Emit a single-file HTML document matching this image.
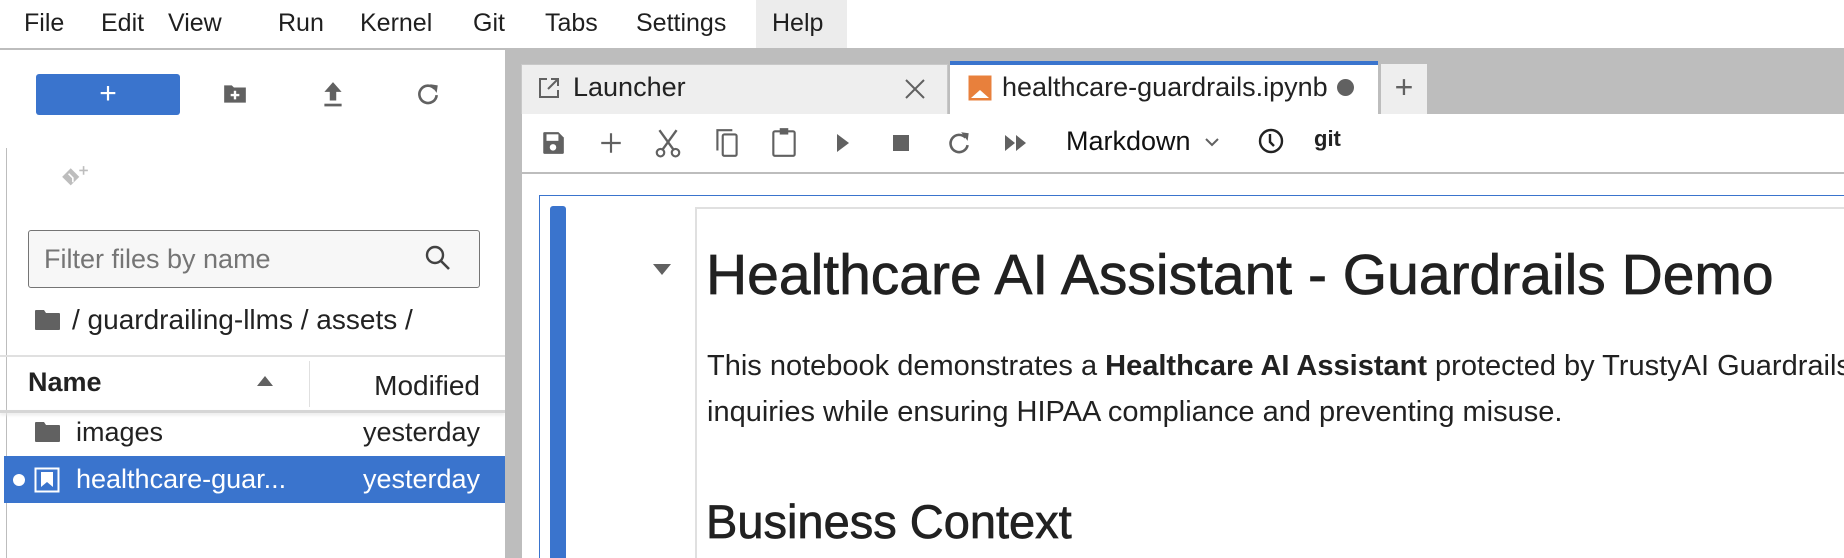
<!DOCTYPE html>
<html><head><meta charset="utf-8"><style>
*{margin:0;padding:0;box-sizing:border-box}
html,body{width:1844px;height:558px;overflow:hidden}
body{background:#fff;font-family:"Liberation Sans",sans-serif;color:#212121}
#w{position:relative;width:1844px;height:558px;overflow:hidden}
.a{position:absolute;white-space:nowrap}
.m{font-size:25px;top:9px;color:#1f1f1f}
.h{-webkit-text-stroke:0.7px #212121}
svg{position:absolute}
</style></head><body><div id="w">
<!-- menu -->
<div class="a" style="left:756px;top:0;width:91px;height:48px;background:#ececec"></div>
<div class="a m" style="left:24px">File</div>
<div class="a m" style="left:101px">Edit</div>
<div class="a m" style="left:168px">View</div>
<div class="a m" style="left:278px">Run</div>
<div class="a m" style="left:360px">Kernel</div>
<div class="a m" style="left:473px">Git</div>
<div class="a m" style="left:545px">Tabs</div>
<div class="a m" style="left:636px">Settings</div>
<div class="a m" style="left:772px">Help</div>
<div class="a" style="left:0;top:48px;width:1844px;height:2px;background:#bdbdbd"></div>

<!-- left panel -->
<div class="a" style="left:6px;top:148px;width:1px;height:410px;background:#bdbdbd"></div>
<div class="a" style="left:36px;top:74px;width:144px;height:41px;background:#3a74cd;border-radius:3px;color:#fff;font-size:30px;text-align:center;line-height:40px">+</div>
<svg style="left:222px;top:81px" width="26" height="26" viewBox="0 0 24 24"><path d="M2 4h7l2 2h11v14H2z" fill="#616161"/><path d="M12 9v8M8 13h8" stroke="#fff" stroke-width="2.2"/></svg>
<svg style="left:320px;top:80px" width="26" height="28" viewBox="0 0 24 26"><path d="M12 2l8 9h-5v8H9v-8H4z" fill="#616161"/><rect x="4" y="22" width="16" height="2.5" fill="#616161"/></svg>
<svg style="left:415px;top:81px" width="26" height="26" viewBox="0 0 24 24"><path d="M18 7A8 8 0 1 0 20 13" fill="none" stroke="#616161" stroke-width="2.4"/><path d="M14 3l7 1-1 7z" fill="#616161"/></svg>
<svg style="left:60px;top:164px" width="30" height="30" viewBox="0 0 28 28"><path d="M10 4l8 8-8 8-8-8z" fill="#bdbdbd"/><path d="M8 9l4 4v4" stroke="#fff" stroke-width="1.5" fill="none"/><path d="M22 2v8M18 6h8" stroke="#bdbdbd" stroke-width="1.5"/></svg>
<div class="a" style="left:28px;top:230px;width:452px;height:58px;border:1.5px solid #757575;border-radius:3px;background:#f7f7f7"></div>
<div class="a" style="left:44px;top:244px;font-size:27px;color:#757575">Filter files by name</div>
<svg style="left:424px;top:244px" width="28" height="28" viewBox="0 0 28 28"><circle cx="11" cy="11" r="8" fill="none" stroke="#424242" stroke-width="2.4"/><path d="M17 17l8 8" stroke="#424242" stroke-width="2.6"/></svg>
<svg style="left:34px;top:309px" width="27" height="22" viewBox="0 0 27 22"><path d="M1 2q0-1 1-1h8l2 3h13q1 0 1 1v15q0 1-1 1H2q-1 0-1-1z" fill="#616161"/></svg>
<div class="a" style="left:72px;top:304px;font-size:28px;color:#222">/ guardrailing-llms / assets /</div>
<div class="a" style="left:0;top:355px;width:505px;height:2px;background:#e0e0e0"></div>
<div class="a" style="left:28px;top:367px;font-size:27px;font-weight:bold;color:#222">Name</div>
<svg style="left:256px;top:375px" width="18" height="12" viewBox="0 0 18 12"><path d="M9 1l8 10H1z" fill="#616161"/></svg>
<div class="a" style="left:309px;top:361px;width:1px;height:46px;background:#e0e0e0"></div>
<div class="a" style="right:1364px;top:370px;font-size:28px;color:#222">Modified</div>
<div class="a" style="left:0;top:410px;width:505px;height:3px;background:#d6d6d6;box-shadow:0 2px 3px #e8e8e8"></div>
<svg style="left:34px;top:421px" width="27" height="22" viewBox="0 0 27 22"><path d="M1 2q0-1 1-1h8l2 3h13q1 0 1 1v15q0 1-1 1H2q-1 0-1-1z" fill="#616161"/></svg>
<div class="a" style="left:76px;top:417px;font-size:27px;color:#222">images</div>
<div class="a" style="right:1364px;top:417px;font-size:27px;color:#222">yesterday</div>
<div class="a" style="left:4px;top:456px;width:501px;height:47px;background:#3a74cd"></div>
<div class="a" style="left:13px;top:474px;width:12px;height:12px;border-radius:50%;background:#fff"></div>
<svg style="left:34px;top:467px" width="26" height="26" viewBox="0 0 26 26"><rect x="1.5" y="1.5" width="23" height="23" fill="none" stroke="#fff" stroke-width="2"/><path d="M7 5h12v15l-6-5-6 5z" fill="#fff"/></svg>
<div class="a" style="left:76px;top:464px;font-size:27px;color:#fff">healthcare-guar...</div>
<div class="a" style="right:1364px;top:464px;font-size:27px;color:#fff">yesterday</div>

<!-- right gray -->
<div class="a" style="left:505px;top:50px;width:1339px;height:64px;background:#bdbdbd"></div>
<div class="a" style="left:505px;top:50px;width:17px;height:508px;background:#bdbdbd"></div>
<!-- tabs -->
<div class="a" style="left:521px;top:64px;width:427px;height:50px;background:#eeeeee;border:1px solid #c8c8c8;border-bottom:none"></div>
<svg style="left:537px;top:76px" width="24" height="24" viewBox="0 0 24 24"><path d="M10 3H3v18h18v-7" fill="none" stroke="#616161" stroke-width="2"/><path d="M14 3h7v7M21 3L11 13" fill="none" stroke="#616161" stroke-width="2"/></svg>
<div class="a" style="left:573px;top:72px;font-size:27px;color:#222">Launcher</div>
<svg style="left:904px;top:78px" width="22" height="22" viewBox="0 0 22 22"><path d="M2 2l18 18M20 2L2 20" stroke="#616161" stroke-width="2"/></svg>
<div class="a" style="left:950px;top:61px;width:428px;height:54px;background:#fff;border-top:4px solid #3a74cd"></div>
<svg style="left:968px;top:75px" width="24" height="26" viewBox="0 0 24 26"><rect x="1.5" y="1.5" width="21" height="23" fill="#e8803c" stroke="#e8803c" stroke-width="2"/><path d="M3 23l9-8 9 8z" fill="#fff"/></svg>
<div class="a" style="left:1002px;top:72px;font-size:27px;color:#222;width:330px;overflow:hidden">healthcare-guardrails.ipynb</div>
<div class="a" style="left:1337px;top:79px;width:17px;height:17px;border-radius:50%;background:#616161"></div>
<div class="a" style="left:1381px;top:64px;width:46px;height:50px;background:#eeeeee;text-align:center;font-size:32px;line-height:46px;color:#616161">+</div>
<!-- toolbar -->
<div class="a" style="left:522px;top:114px;width:1322px;height:60px;background:#fff;border-bottom:2px solid #bdbdbd"></div>
<svg style="left:540px;top:130px" width="26" height="26" viewBox="0 0 24 24"><path d="M3 3q0-1 1-1h13l5 5v14q0 1-1 1H4q-1 0-1-1z" fill="#616161"/><rect x="6" y="4" width="11" height="6" fill="#fff"/><circle cx="12" cy="16" r="3" fill="#fff"/></svg>
<svg style="left:598px;top:130px" width="26" height="26" viewBox="0 0 24 24"><path d="M12 3v18M3 12h18" stroke="#616161" stroke-width="2"/></svg>
<svg style="left:654px;top:128px" width="28" height="30" viewBox="0 0 26 28"><circle cx="6" cy="23" r="3.5" fill="none" stroke="#616161" stroke-width="2"/><circle cx="20" cy="23" r="3.5" fill="none" stroke="#616161" stroke-width="2"/><path d="M8 20L21 2M18 20L5 2" stroke="#616161" stroke-width="2.2"/></svg>
<svg style="left:713px;top:127px" width="28" height="32" viewBox="0 0 26 30"><path d="M4 22V3h14" fill="none" stroke="#616161" stroke-width="2"/><rect x="9" y="7" width="13" height="20" rx="1.5" fill="none" stroke="#616161" stroke-width="2"/></svg>
<svg style="left:770px;top:126px" width="28" height="32" viewBox="0 0 26 30"><rect x="3" y="5" width="20" height="23" rx="1.5" fill="none" stroke="#616161" stroke-width="2"/><rect x="9" y="2" width="8" height="6" fill="#616161"/></svg>
<svg style="left:833px;top:132px" width="20" height="22" viewBox="0 0 20 22"><path d="M4 2l12 9-12 9z" fill="#616161"/></svg>
<svg style="left:891px;top:133px" width="20" height="20" viewBox="0 0 20 20"><rect x="2" y="2" width="16" height="16" fill="#616161"/></svg>
<svg style="left:946px;top:129px" width="26" height="28" viewBox="0 0 24 26"><path d="M18 8A8 8 0 1 0 20 15" fill="none" stroke="#616161" stroke-width="2.4"/><path d="M14 3l7 1-1 7z" fill="#616161"/></svg>
<svg style="left:1003px;top:133px" width="26" height="20" viewBox="0 0 26 20"><path d="M2 2l10 8-10 8zM13 2l10 8-10 8z" fill="#616161"/></svg>
<div class="a" style="left:1066px;top:126px;font-size:27px;color:#111">Markdown</div>
<svg style="left:1203px;top:136px" width="18" height="12" viewBox="0 0 18 12"><path d="M3 3l6 6 6-6" fill="none" stroke="#616161" stroke-width="2"/></svg>
<svg style="left:1257px;top:127px" width="28" height="28" viewBox="0 0 28 28"><circle cx="14" cy="14" r="11" fill="none" stroke="#222" stroke-width="2.4"/><path d="M13 7v8l4 4" fill="none" stroke="#222" stroke-width="2.4"/></svg>
<div class="a" style="left:1314px;top:126px;font-size:22px;font-weight:bold;color:#222">git</div>
<!-- notebook -->
<div class="a" style="left:539px;top:195px;width:1305px;height:363px;border:1.5px solid #3a74cd;border-bottom:none;border-right:none"></div>
<div class="a" style="left:550px;top:206px;width:16px;height:352px;background:#3a74cd;border-radius:3px 3px 0 0"></div>
<div class="a" style="left:695px;top:207px;width:1149px;height:351px;border-top:2px solid #e0e0e0;border-left:2px solid #e0e0e0"></div>
<svg style="left:652px;top:262px" width="20" height="14" viewBox="0 0 20 14"><path d="M1 2h18l-9 11z" fill="#616161"/></svg>
<div class="a h" style="left:706px;top:242px;font-size:57px;color:#212121">Healthcare AI Assistant - Guardrails Demo</div>
<div class="a" style="left:707px;top:350px;font-size:29px;color:#212121">This notebook demonstrates a <b>Healthcare AI Assistant</b> protected by TrustyAI Guardrails</div>
<div class="a" style="left:707px;top:396px;font-size:29px;color:#212121">inquiries while ensuring HIPAA compliance and preventing misuse.</div>
<div class="a h" style="left:706px;top:494px;font-size:47px;color:#212121">Business Context</div>
</div></body></html>
